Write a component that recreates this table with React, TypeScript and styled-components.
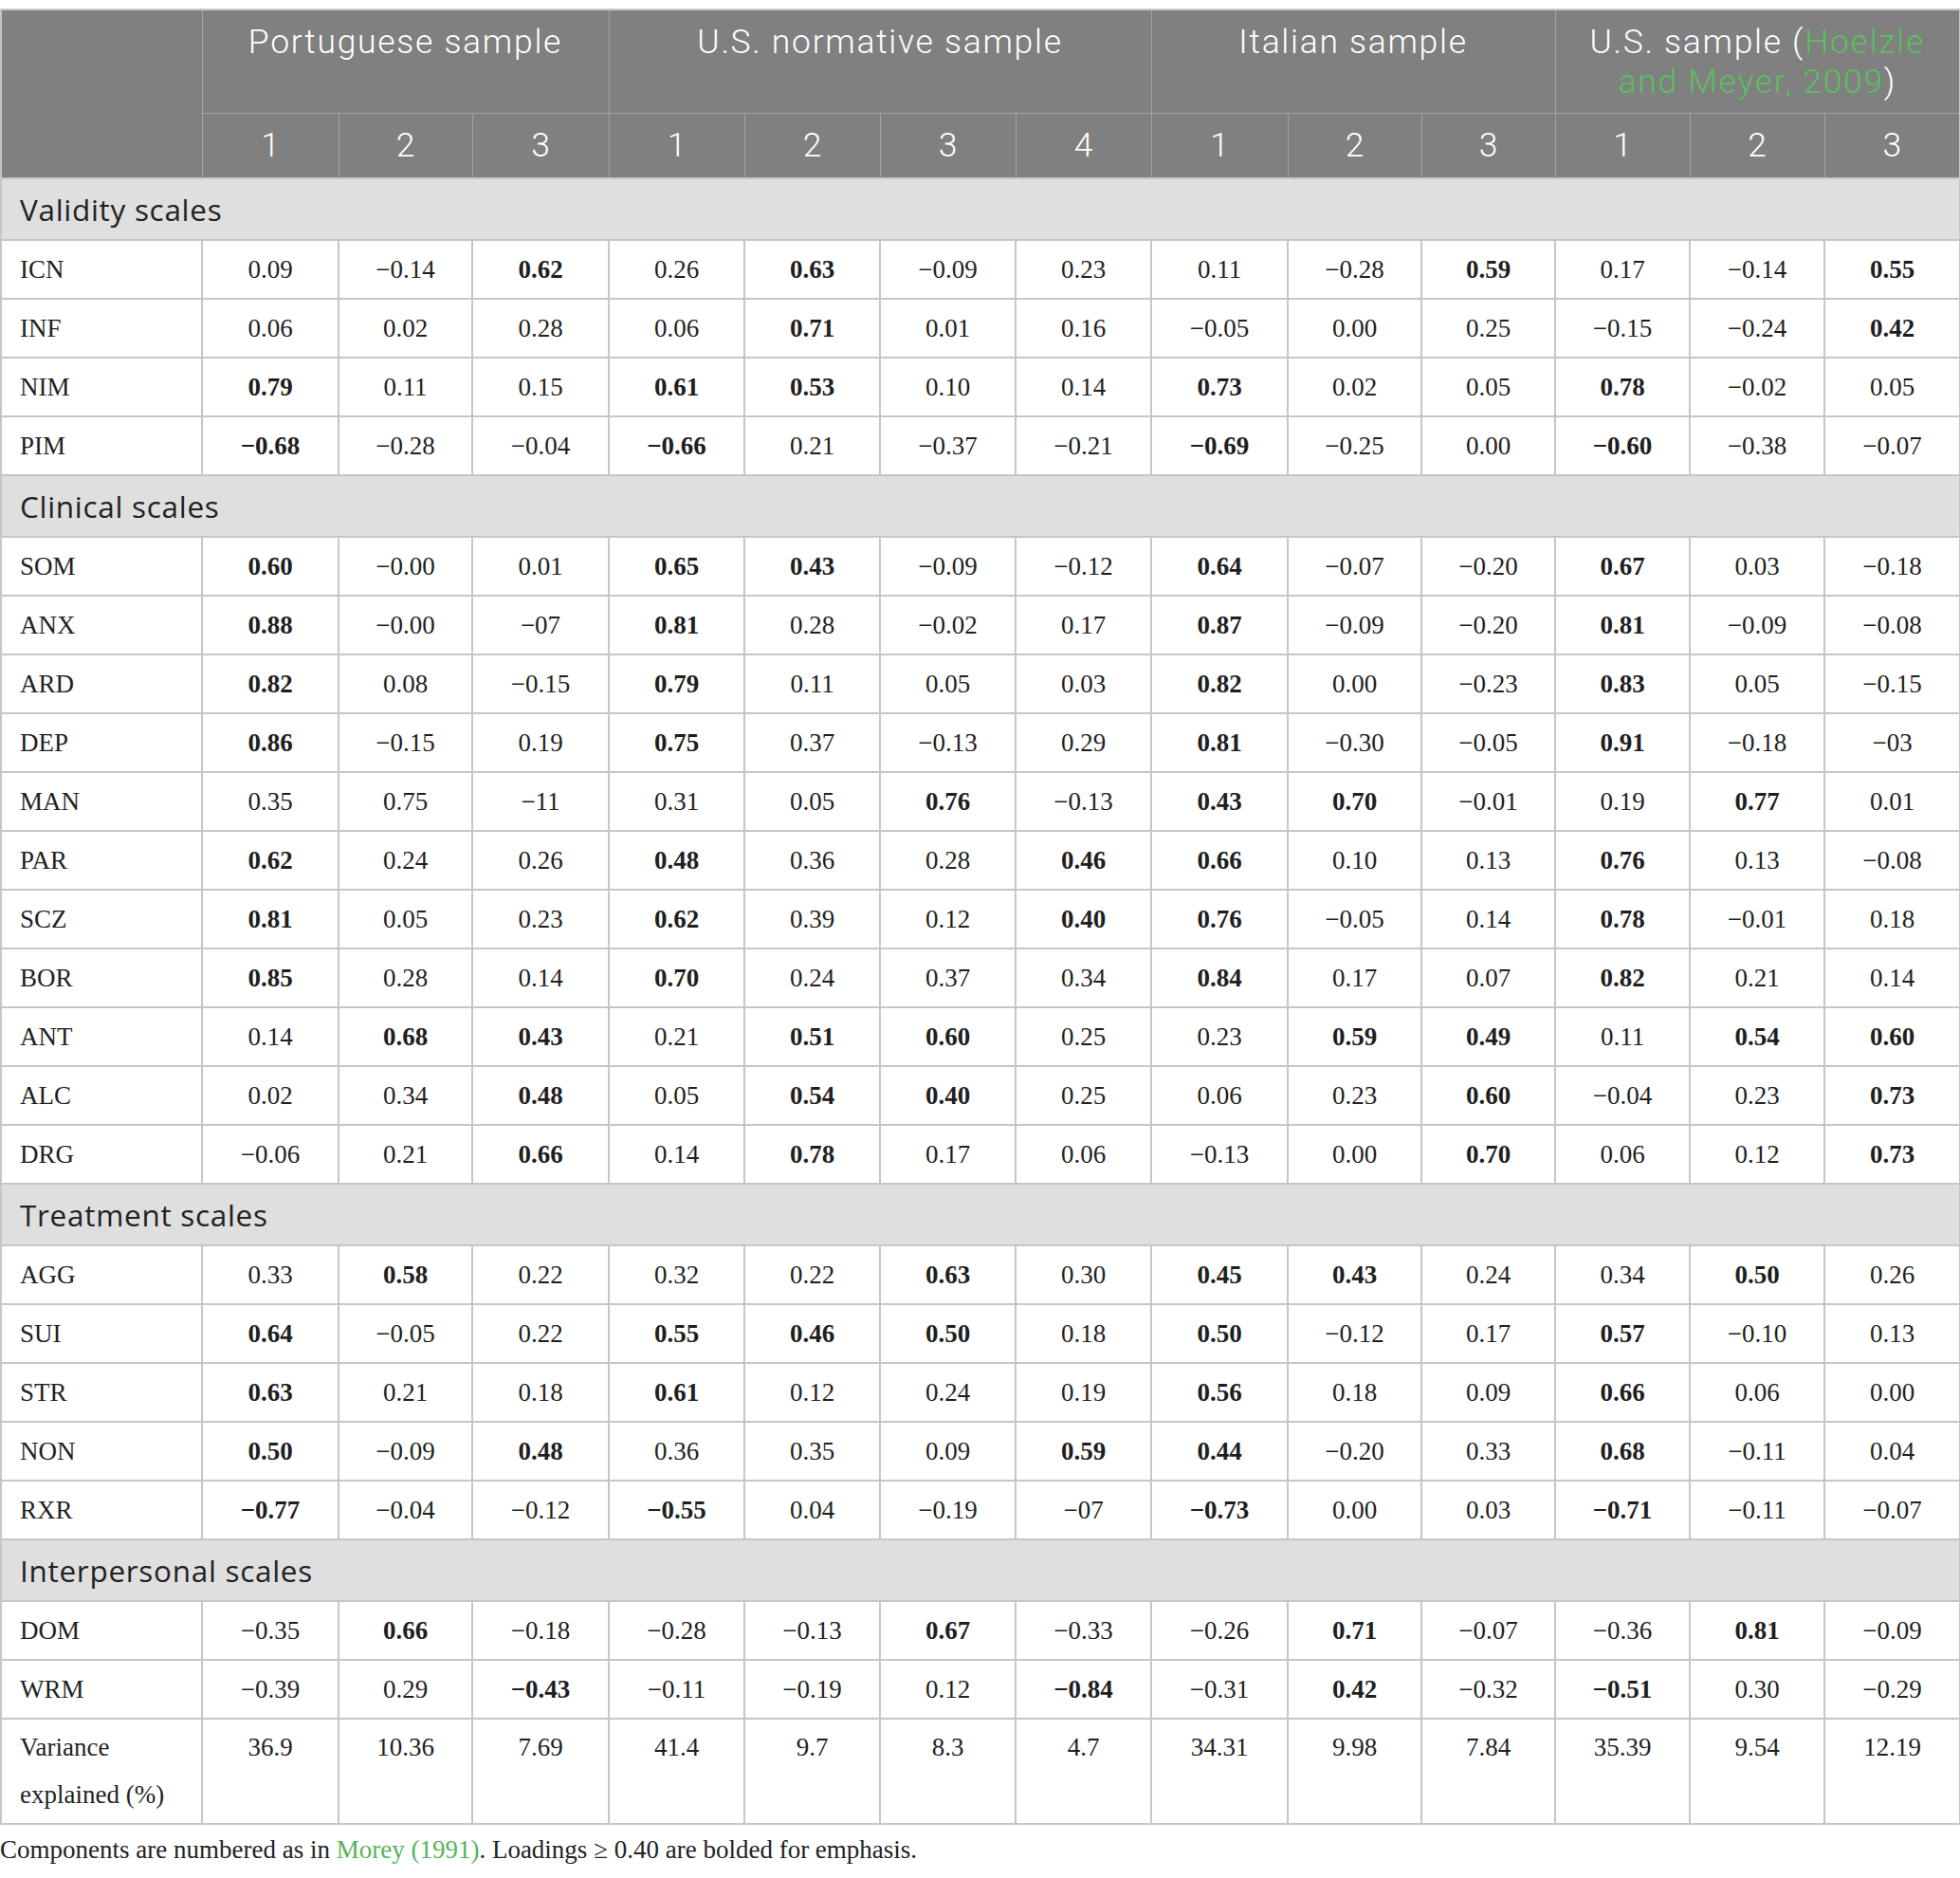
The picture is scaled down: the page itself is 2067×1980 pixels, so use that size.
import React from "react";
import styled, { createGlobalStyle } from "styled-components";

const GlobalStyle = createGlobalStyle`
  html, body {
    margin: 0;
    padding: 0;
    background: #ffffff;
  }
`;

const HEAD_SANS = `Roboto, "Open Sans", "Noto Sans", sans-serif`;
const SANS = `"Open Sans", "Noto Sans", "DejaVu Sans", sans-serif`;
const SERIF = `"Liberation Serif", "DejaVu Serif", serif`;

const Page = styled.div`
  padding-top: 9px;
  width: 2067px;
`;

const Table = styled.table`
  border-collapse: collapse;
  table-layout: fixed;
  width: 2067px;
  border: 2px solid #c6c6c6;
`;

const HeadRow = styled.tr<{ $h: number }>`
  height: ${(p) => p.$h}px;
`;

const HeadCell = styled.th<{ $top?: boolean }>`
  background: #7f807f;
  color: #ffffff;
  font-family: ${HEAD_SANS};
  font-weight: 300;
  font-size: 35.5px;
  letter-spacing: ${(p) => (p.$top ? "1.7px" : "0")};
  line-height: 42px;
  text-align: center;
  vertical-align: ${(p) => (p.$top ? "top" : "middle")};
  padding: ${(p) => (p.$top ? "12px 10px 0" : "0 4px")};
  border: 1px solid #a2a3a2;
  box-sizing: border-box;
`;

const Cite = styled.span`
  color: #5cbf5e;
`;

const SectionRow = styled.tr`
  height: 65px;
`;

const SectionCell = styled.td`
  background: #e0dfe0;
  color: #222222;
  font-family: ${SANS};
  font-weight: 400;
  font-size: 31.5px;
  letter-spacing: 0.7px;
  padding: 0 0 0 19px;
  text-align: left;
  vertical-align: middle;
  border: 2px solid #c6c6c6;
`;

const DataRow = styled.tr<{ $h: number }>`
  height: ${(p) => p.$h}px;
`;

const LabelCell = styled.td<{ $top?: boolean }>`
  font-family: ${SERIF};
  font-size: 27px;
  line-height: 50px;
  color: #1f1f1f;
  text-align: left;
  padding: ${(p) => (p.$top ? "4px 10px 0 19px" : "0 10px 0 19px")};
  vertical-align: ${(p) => (p.$top ? "top" : "middle")};
  border: 2px solid #c6c6c6;
  white-space: nowrap;
`;

const ValueCell = styled.td<{ $bold?: boolean; $top?: boolean }>`
  font-family: ${SERIF};
  font-size: 27px;
  line-height: 50px;
  color: #1f1f1f;
  font-weight: ${(p) => (p.$bold ? 700 : 400)};
  text-align: center;
  padding: ${(p) => (p.$top ? "4px 4px 0" : "0 4px")};
  vertical-align: ${(p) => (p.$top ? "top" : "middle")};
  border: 2px solid #c6c6c6;
  white-space: nowrap;
`;

const Footnote = styled.p`
  margin: 0;
  font-family: ${SERIF};
  font-size: 27px;
  line-height: 52px;
  color: #222222;
`;

const FootLink = styled.span`
  color: #55b35a;
`;

const colWidths = [212, 144, 141, 144, 143, 143, 143, 143, 144, 141, 141, 142, 142, 143];

type Section = { title: string; rows: string[] };

const sections: Section[] = [
  {
    title: "Validity scales",
    rows: [
      "ICN|0.09|-0.14|*0.62|0.26|*0.63|-0.09|0.23|0.11|-0.28|*0.59|0.17|-0.14|*0.55",
      "INF|0.06|0.02|0.28|0.06|*0.71|0.01|0.16|-0.05|0.00|0.25|-0.15|-0.24|*0.42",
      "NIM|*0.79|0.11|0.15|*0.61|*0.53|0.10|0.14|*0.73|0.02|0.05|*0.78|-0.02|0.05",
      "PIM|*-0.68|-0.28|-0.04|*-0.66|0.21|-0.37|-0.21|*-0.69|-0.25|0.00|*-0.60|-0.38|-0.07",
    ],
  },
  {
    title: "Clinical scales",
    rows: [
      "SOM|*0.60|-0.00|0.01|*0.65|*0.43|-0.09|-0.12|*0.64|-0.07|-0.20|*0.67|0.03|-0.18",
      "ANX|*0.88|-0.00|-07|*0.81|0.28|-0.02|0.17|*0.87|-0.09|-0.20|*0.81|-0.09|-0.08",
      "ARD|*0.82|0.08|-0.15|*0.79|0.11|0.05|0.03|*0.82|0.00|-0.23|*0.83|0.05|-0.15",
      "DEP|*0.86|-0.15|0.19|*0.75|0.37|-0.13|0.29|*0.81|-0.30|-0.05|*0.91|-0.18|-03",
      "MAN|0.35|0.75|-11|0.31|0.05|*0.76|-0.13|*0.43|*0.70|-0.01|0.19|*0.77|0.01",
      "PAR|*0.62|0.24|0.26|*0.48|0.36|0.28|*0.46|*0.66|0.10|0.13|*0.76|0.13|-0.08",
      "SCZ|*0.81|0.05|0.23|*0.62|0.39|0.12|*0.40|*0.76|-0.05|0.14|*0.78|-0.01|0.18",
      "BOR|*0.85|0.28|0.14|*0.70|0.24|0.37|0.34|*0.84|0.17|0.07|*0.82|0.21|0.14",
      "ANT|0.14|*0.68|*0.43|0.21|*0.51|*0.60|0.25|0.23|*0.59|*0.49|0.11|*0.54|*0.60",
      "ALC|0.02|0.34|*0.48|0.05|*0.54|*0.40|0.25|0.06|0.23|*0.60|-0.04|0.23|*0.73",
      "DRG|-0.06|0.21|*0.66|0.14|*0.78|0.17|0.06|-0.13|0.00|*0.70|0.06|0.12|*0.73",
    ],
  },
  {
    title: "Treatment scales",
    rows: [
      "AGG|0.33|*0.58|0.22|0.32|0.22|*0.63|0.30|*0.45|*0.43|0.24|0.34|*0.50|0.26",
      "SUI|*0.64|-0.05|0.22|*0.55|*0.46|*0.50|0.18|*0.50|-0.12|0.17|*0.57|-0.10|0.13",
      "STR|*0.63|0.21|0.18|*0.61|0.12|0.24|0.19|*0.56|0.18|0.09|*0.66|0.06|0.00",
      "NON|*0.50|-0.09|*0.48|0.36|0.35|0.09|*0.59|*0.44|-0.20|0.33|*0.68|-0.11|0.04",
      "RXR|*-0.77|-0.04|-0.12|*-0.55|0.04|-0.19|-07|*-0.73|0.00|0.03|*-0.71|-0.11|-0.07",
    ],
  },
  {
    title: "Interpersonal scales",
    rows: [
      "DOM|-0.35|*0.66|-0.18|-0.28|-0.13|*0.67|-0.33|-0.26|*0.71|-0.07|-0.36|*0.81|-0.09",
      "WRM|-0.39|0.29|*-0.43|-0.11|-0.19|0.12|*-0.84|-0.31|*0.42|-0.32|*-0.51|0.30|-0.29",
    ],
  },
];

const variance = ["36.9", "10.36", "7.69", "41.4", "9.7", "8.3", "4.7", "34.31", "9.98", "7.84", "35.39", "9.54", "12.19"];

const fmt = (v: string) => v.replace(/-/g, "\u2212");

const groups: { label: React.ReactNode; cols: string[] }[] = [
  { label: "Portuguese sample", cols: ["1", "2", "3"] },
  { label: "U.S. normative sample", cols: ["1", "2", "3", "4"] },
  { label: "Italian sample", cols: ["1", "2", "3"] },
  {
    label: (
      <>
        U.S. sample (<Cite>Hoelzle</Cite>
        <br />
        <Cite>and Meyer, 2009</Cite>)
      </>
    ),
    cols: ["1", "2", "3"],
  },
];

export default function App() {
  return (
    <>
      <GlobalStyle />
      <Page>
        <Table>
          <colgroup>
            {colWidths.map((w, i) => (
              <col key={i} style={{ width: w }} />
            ))}
          </colgroup>
          <thead>
            <HeadRow $h={109}>
              <HeadCell rowSpan={2} />
              {groups.map((g, i) => (
                <HeadCell key={i} colSpan={g.cols.length} $top>
                  {g.label}
                </HeadCell>
              ))}
            </HeadRow>
            <HeadRow $h={69}>
              {groups.flatMap((g, gi) =>
                g.cols.map((c, ci) => <HeadCell key={`${gi}-${ci}`}>{c}</HeadCell>)
              )}
            </HeadRow>
          </thead>
          <tbody>
            {sections.map((s) => (
              <React.Fragment key={s.title}>
                <SectionRow>
                  <SectionCell colSpan={14}>{s.title}</SectionCell>
                </SectionRow>
                {s.rows.map((r) => {
                  const [label, ...vals] = r.split("|");
                  return (
                    <DataRow key={label} $h={62}>
                      <LabelCell>{label}</LabelCell>
                      {vals.map((v, i) => {
                        const bold = v.startsWith("*");
                        const text = fmt(bold ? v.slice(1) : v);
                        return (
                          <ValueCell key={i} $bold={bold}>
                            {text}
                          </ValueCell>
                        );
                      })}
                    </DataRow>
                  );
                })}
              </React.Fragment>
            ))}
            <DataRow $h={111}>
              <LabelCell $top>
                Variance
                <br />
                explained (%)
              </LabelCell>
              {variance.map((v, i) => (
                <ValueCell key={i} $top>
                  {v}
                </ValueCell>
              ))}
            </DataRow>
          </tbody>
        </Table>
        <Footnote>
          Components are numbered as in <FootLink>Morey (1991)</FootLink>. Loadings ≥ 0.40 are bolded for
          emphasis.
        </Footnote>
      </Page>
    </>
  );
}
